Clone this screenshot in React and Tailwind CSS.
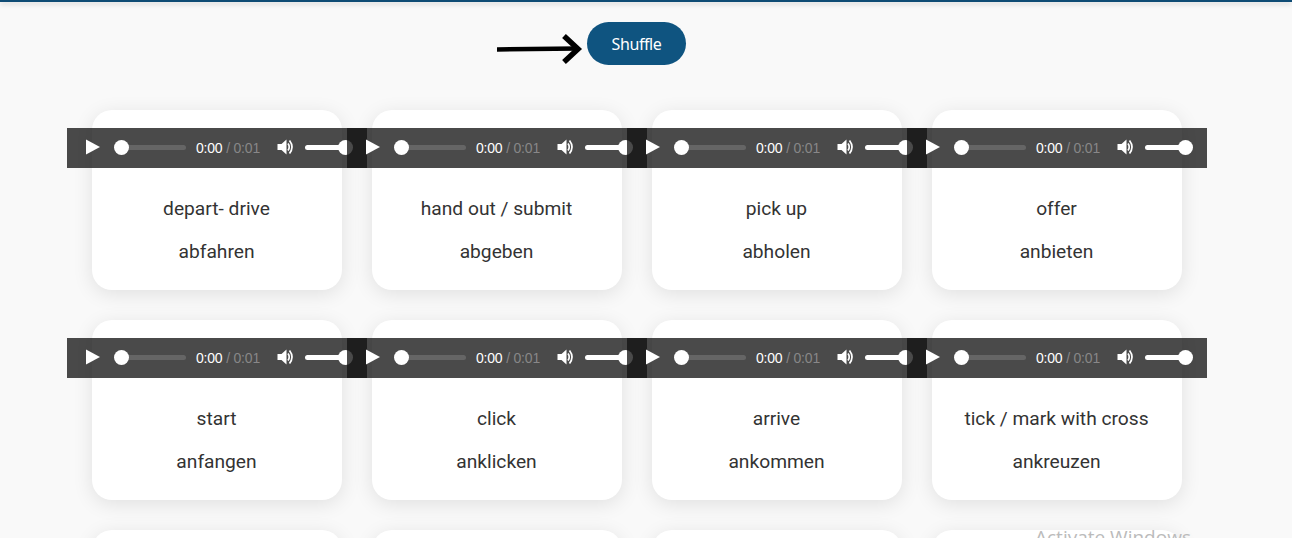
const rows = [
  [["depart- drive", "abfahren"], ["hand out / submit", "abgeben"], ["pick up", "abholen"], ["offer", "anbieten"]],
  [["start", "anfangen"], ["click", "anklicken"], ["arrive", "ankommen"], ["tick / mark with cross", "ankreuzen"]],
];

function AudioBar() {
  return (
    <div className="relative -mx-[25px] mt-[18px] flex h-10 w-[300px] items-center bg-[rgba(17,17,17,0.76)] font-['Liberation_Sans',sans-serif] text-[14px]">
      <svg width="16" height="16" viewBox="0 0 16 16" className="ml-[18px] -translate-y-px shrink-0 text-white">
        <path d="M1 0.5 L15 8 L1 15.5 Z" fill="currentColor" />
      </svg>
      <div className="relative ml-[14px] h-[5px] w-[71px] -translate-y-px shrink-0 rounded-full bg-white/15">
        <span className="absolute -left-px -top-[5px] size-[15px] rounded-full bg-white" />
      </div>
      <div className="ml-[10px] w-[72px] shrink-0 whitespace-nowrap tracking-[-0.2px] text-white">
        0:00 <span className="text-white/35">/ 0:01</span>
      </div>
      <svg width="18" height="18" viewBox="0 0 18 18" className="ml-[9px] -translate-y-px shrink-0">
        <path d="M0.5 6 H4.5 L9.5 1.5 V16.5 L4.5 12 H0.5 Z" fill="#fff" />
        <path d="M11 5.5 Q13.5 9 11 12.5" fill="none" stroke="#fff" strokeWidth="1.7" />
        <path d="M12.5 2.5 Q17.5 9 12.5 15.5" fill="none" stroke="#fff" strokeWidth="1.7" />
      </svg>
      <div className="relative ml-[10px] h-[5px] w-[41px] -translate-y-px shrink-0 rounded-full bg-white">
        <span className="absolute -right-[7px] -top-[5px] size-[15px] rounded-full bg-white" />
      </div>
    </div>
  );
}

function Card({ en, de }) {
  return (
    <div className="h-[180px] w-[250px] rounded-[20px] bg-white shadow-[0_4px_20px_rgba(0,0,0,0.1)]">
      <AudioBar />
      <p className="mt-[29px] pr-px text-center text-[19.2px] leading-[24px] text-[#333]">{en}</p>
      <p className="mt-[19px] pr-px text-center text-[19.2px] leading-[24px] text-[#333]">{de}</p>
    </div>
  );
}

export default function App() {
  return (
    <div className="relative h-[538px] overflow-hidden bg-[#f9f9f9] font-['Roboto',sans-serif]">
      <div className="h-[2px] bg-[#0f4c75] shadow-[0_2px_5px_rgba(0,0,0,0.2)]" />
      <div className="ml-[497px] mt-5 flex items-center">
        <svg width="88" height="32" viewBox="0 0 88 32" className="mt-[8px] shrink-0">
          <path d="M0 17.5 L81 16.5" fill="none" stroke="#000" strokeWidth="4.5" />
          <path d="M67 4 L81 17 L67 30" fill="none" stroke="#000" strokeWidth="5.5" />
        </svg>
        <button className="ml-[2px] h-[43px] w-[99px] rounded-[22px] bg-[#0f5480] font-['Noto_Sans',sans-serif] text-[16px] tracking-[-0.4px] text-white">
          Shuffle
        </button>
      </div>
      <div className="ml-[92px] mt-[45px] grid w-[1090px] grid-cols-[repeat(4,250px)] gap-[30px]">
        {rows.flat().map(([en, de]) => (
          <Card key={en} en={en} de={de} />
        ))}
        {[0, 1, 2, 3].map((i) => (
          <div key={i} className="h-[180px] w-[250px] rounded-[20px] bg-white shadow-[0_4px_20px_rgba(0,0,0,0.1)]" />
        ))}
      </div>
      <div className="absolute left-[1035px] top-[524px] whitespace-nowrap font-['Open_Sans',sans-serif] text-[19px] leading-[27px] text-[#bbb]">
        Activate Windows
      </div>
    </div>
  );
}
